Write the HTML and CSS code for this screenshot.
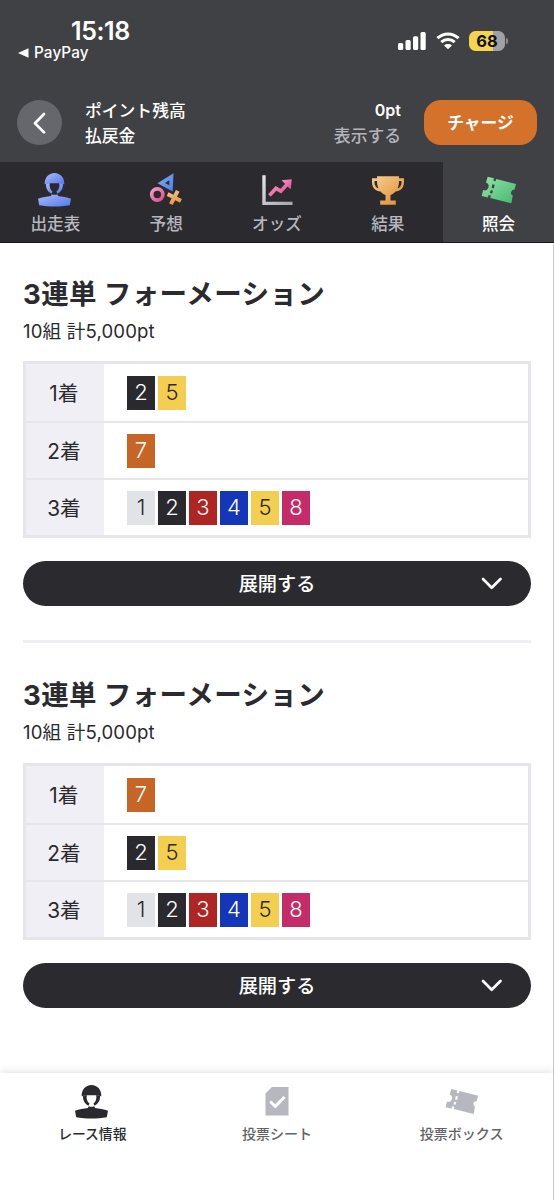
FILE: index.html
```html
<!DOCTYPE html>
<html lang="ja">
<head>
<meta charset="utf-8">
<title>照会</title>
<link rel="stylesheet" href="styles.css">
</head>
<body>
<svg class="defs" width="0" height="0" aria-hidden="true">
  <defs>
    <linearGradient id="blue" x1="0" y1="0" x2="1" y2="1"><stop offset="0" stop-color="#a9bbfa"/><stop offset="1" stop-color="#5478e8"/></linearGradient>
    <linearGradient id="blue2" x1="0" y1="0" x2="1" y2="1"><stop offset="0" stop-color="#86adf2"/><stop offset="1" stop-color="#4a7fe0"/></linearGradient>
    <linearGradient id="pink" x1="0" y1="0" x2="1" y2="1"><stop offset="0" stop-color="#f79bc4"/><stop offset="1" stop-color="#dc4f8f"/></linearGradient>
    <linearGradient id="gold" x1="0" y1="0" x2="1" y2="1"><stop offset="0" stop-color="#f8cf91"/><stop offset="1" stop-color="#dd8b31"/></linearGradient>
    <linearGradient id="green" x1="0" y1="0" x2="1" y2="1"><stop offset="0" stop-color="#93e4a5"/><stop offset="1" stop-color="#43b970"/></linearGradient>
    <linearGradient id="silver" x1="0" y1="0" x2="1" y2="1"><stop offset="0" stop-color="#e4e4e8"/><stop offset="1" stop-color="#a5a5ad"/></linearGradient>
    <symbol id="rider" viewBox="0 0 34 34">
      <path d="M6.700 11.500C6.200 5 10.500 0 16.500 0S26.800 5 26.300 11.500C25 10.600 23.500 10.200 22.200 10.200H10.800C9.500 10.200 8 10.600 6.700 11.500Z"/>
      <path d="M8 10.500 11.700 10C11.300 14 12.200 16.800 14.600 18.700L13.300 20.700C9.800 18.500 7.600 15.500 8 10.500ZM25 10.500 21.300 10C21.700 14 20.800 16.800 18.400 18.700L19.700 20.700C23.200 18.500 25.400 15.500 25 10.500Z"/>
      <path d="M0 25.700C4 24.200 9 23.900 12.900 23L13.700 21.200C15.700 21.900 17.300 21.900 19.300 21.200L20.100 23C24 23.900 29 24.200 33 25.700L31.800 32.200C22 34 11 34 1.200 32.200Z"/>
    </symbol>
    <symbol id="ticket" viewBox="0 0 36 30">
      <path d="M6.700.7 13 2.300 12.400 4.700 14.600 5.300 15.200 2.900 35 8 33.500 13.800A3 3 0 0 0 31.800 19.500L30.300 27.300 9.300 22 9.900 19.600 7.600 19 7 21.400.7 20 2.100 14A3 3 0 0 0 5 6.500ZM11.500 8.200 10.600 11.800 12.800 12.400 13.700 8.800ZM9.700 14.300 8.900 17 11.200 17.500 12 14.800Z" fill-rule="evenodd"/>
    </symbol>
  </defs>
</svg>

<header class="header">
  <div class="status">
    <div class="status-left">
      <div class="clock">15:18</div>
      <div class="back-app"><svg width="11" height="10" viewBox="0 0 11 10"><path d="M0 5 10.500 .3V9.700Z"/></svg><span>PayPay</span></div>
    </div>
    <div class="status-right">
      <svg class="signal" width="28" height="18" viewBox="0 0 28 18"><rect y="11" width="5.200" height="7" rx="1.500"/><rect x="7.500" y="8" width="5.200" height="10" rx="1.500"/><rect x="15" y="4.200" width="5.200" height="13.800" rx="1.500"/><rect x="22.500" width="5.200" height="18" rx="1.500"/></svg>
      <svg class="wifi" width="24" height="18" viewBox="0 0 24 18"><path d="M1.400 6.200C7.500.5 16.500.5 22.600 6.200M5.300 10.200C9.200 6.700 14.800 6.700 18.700 10.200" fill="none" stroke="#fff" stroke-width="3"/><path d="M12 17.300 8 13.400C10.300 11.500 13.700 11.500 16 13.400Z"/></svg>
      <div class="battery">68</div><i class="battery-tip"></i>
    </div>
  </div>
  <div class="account">
    <button class="back" aria-label="戻る"><svg width="14" height="22" viewBox="0 0 14 22"><path d="M11 2 2 11.200 11 20.400"/></svg></button>
    <div class="names"><div>ポイント残高</div><div>払戻金</div></div>
    <div class="values"><div>0pt</div><div class="muted">表示する</div></div>
    <button class="charge">チャージ</button>
  </div>
</header>

<nav class="tabs">
  <a class="tab"><svg width="34" height="34" fill="url(#blue)"><use href="#rider"/></svg><span>出走表</span></a>
  <a class="tab"><svg width="34" height="34" viewBox="0 0 34 34"><path d="M24.500.2 8.500 10.300 23.700 18.500ZM20.300 7.300V12.200L16 10Z" fill="url(#blue2)" fill-rule="evenodd"/><circle cx="8.300" cy="21.500" r="5.600" fill="none" stroke="url(#pink)" stroke-width="3.700"/><g transform="rotate(27 25.300 24.500)" fill="url(#gold)"><path d="M23.300 17h4v5.500h5.500v4h-5.500v5.500h-4v-5.500H17.800v-4h5.500Z"/></g></svg><span>予想</span></a>
  <a class="tab"><svg width="34" height="34" viewBox="0 0 34 34"><path d="M2.300 2.200H5.700V28.700H32.500V32H2.300Z" fill="url(#silver)"/><path d="M9.500 22.500 16 15.300 20.800 18.200 28 10.600" fill="none" stroke="url(#pink)" stroke-width="3.700"/><path d="M21.500 7.300 31.800 6.200 30.700 16.500Z" fill="url(#pink)"/></svg><span>オッズ</span></a>
  <a class="tab"><svg width="34" height="34" viewBox="0 0 34 34"><path d="M6 3.200H28V5.200H33V9C33 15 29 18.500 24.500 18.500 23 20.500 21 21.500 19.500 22V27.500H24.800V31.800H9.200V27.500H14.500V22C13 21.500 11 20.500 9.500 18.500 5 18.500 1 15 1 9V5.200H6ZM6 8H3.500V9.500C3.500 12.500 5 14.800 7.500 15.500 6.500 13.500 6 11 6 8ZM28 8C28 11 27.500 13.500 26.500 15.500 29 14.800 30.500 12.500 30.500 9.500V8Z" fill="url(#gold)" fill-rule="evenodd"/></svg><span>結果</span></a>
  <a class="tab active"><svg width="36" height="34" viewBox="0 -3 36 34" fill="url(#green)"><use href="#ticket" width="36" height="30"/></svg><span>照会</span></a>
</nav>

<main class="content">
  <section class="bet">
    <h2>3連単 フォーメーション</h2>
    <p>10組 計5,000pt</p>
    <div class="grid">
      <div class="row"><div class="place">1着</div><div class="chips"><b class="n2">2</b><b class="n5">5</b></div></div>
      <div class="row"><div class="place">2着</div><div class="chips"><b class="n7">7</b></div></div>
      <div class="row"><div class="place">3着</div><div class="chips"><b class="n1">1</b><b class="n2">2</b><b class="n3">3</b><b class="n4">4</b><b class="n5">5</b><b class="n8">8</b></div></div>
    </div>
    <button class="expand"><span>展開する</span><svg width="22" height="13" viewBox="0 0 22 13"><path d="M2 2 10.700 10.800 19.500 2"/></svg></button>
  </section>
  <section class="bet">
    <h2>3連単 フォーメーション</h2>
    <p>10組 計5,000pt</p>
    <div class="grid">
      <div class="row"><div class="place">1着</div><div class="chips"><b class="n7">7</b></div></div>
      <div class="row"><div class="place">2着</div><div class="chips"><b class="n2">2</b><b class="n5">5</b></div></div>
      <div class="row"><div class="place">3着</div><div class="chips"><b class="n1">1</b><b class="n2">2</b><b class="n3">3</b><b class="n4">4</b><b class="n5">5</b><b class="n8">8</b></div></div>
    </div>
    <button class="expand"><span>展開する</span><svg width="22" height="13" viewBox="0 0 22 13"><path d="M2 2 10.700 10.800 19.500 2"/></svg></button>
  </section>
</main>

<nav class="bottom">
  <a class="item current"><svg width="34" height="34"><use href="#rider"/></svg><span>レース情報</span></a>
  <a class="item"><svg width="34" height="34" viewBox="0 0 34 34"><path d="M12 2H28.500V30.500H5.500V8.500Z"/><path d="M10.200 16.500 15.300 21.300 24.500 12" fill="none" stroke="#fff" stroke-width="3"/></svg><span>投票シート</span></a>
  <a class="item"><svg width="34" height="34" viewBox="0 -3.500 36 36"><use href="#ticket" width="36" height="30"/></svg><span>投票ボックス</span></a>
</nav>
</body>
</html>
```
FILE: styles.css
```css
* { box-sizing: border-box; }

body {
  margin: 0;
  width: 554px;
  height: 1200px;
  display: flex;
  flex-direction: column;
  background: #fff;
  color: #2a2a2f;
  font-family: Inter, "Noto Sans CJK JP", sans-serif;
  overflow: hidden;
}

h2, p { margin: 0; }
button { border: 0; padding: 0; font: inherit; color: #fff; }
svg { display: block; flex: none; }
.defs { position: absolute; }

.header { height: 162px; background: #404145; color: #fff; }
.status { height: 100px; display: flex; justify-content: space-between; }
.status svg { fill: #fff; }
.status-left { padding: 16px 0 0 18px; }
.clock { padding-left: 53px; font-size: 25px; font-weight: 600; line-height: 30px; letter-spacing: -.4px; }
.back-app { display: flex; align-items: center; gap: 5px; font-size: 15.300px; font-weight: 500; line-height: 13px; letter-spacing: .1px; }
.status-right { display: flex; height: 20px; margin: 31px 46px 0 0; align-items: center; }
.wifi { margin: 0 9px 0 10px; }
.battery {
  width: 36px; height: 20px; border-radius: 6.500px;
  background: linear-gradient(90deg, #f6d54e 68%, #a1a1a3 68%);
  color: #111; font-size: 16.500px; font-weight: 700; line-height: 20px; text-align: center;
}
.battery-tip { width: 2px; height: 6px; margin-left: 1px; background: #8e8e91; border-radius: 0 2px 2px 0; }

.account { display: flex; padding: 0 17px; align-items: center; height: 45px; font-size: 16.800px; font-weight: 500; line-height: 25px; }
.back { width: 45px; height: 45px; border-radius: 50%; background: #66676d; display: grid; place-items: center; }
.back svg, .expand svg { fill: none; stroke: #fff; stroke-width: 2.700px; stroke-linecap: round; stroke-linejoin: round; }
.names { margin-left: 23px; padding-top: 2px; }
.values { margin-left: auto; padding-top: 2px; text-align: right; }
.values div:first-child { font-weight: 600; font-size: 16px; line-height: 22px; padding-bottom: 3px; }
.muted { color: #b4b4bb; }
.charge { width: 113px; height: 45px; margin-left: 23px; padding-top: 1px; border-radius: 17px; background: #d4712b; font-weight: 700; }

.tabs { height: 81px; display: grid; grid-template-columns: repeat(5, 1fr); background: #2b2a2f; border-bottom: 1px solid #18181b; margin-bottom: 1px; }
.tab { display: flex; flex-direction: column; align-items: center; padding-top: 11px; color: #b7b7bf; font-size: 16.600px; font-weight: 500; line-height: 34px; }
.tab.active { color: #fff; background: #404145; }

.content { flex: 1; padding: 31px 23px 0; box-shadow: inset -1px 0 #c9c9cb; }
.bet + .bet { margin-top: 34px; padding-top: 33px; border-top: 3px solid #f0eff5; }
.bet h2 { font-size: 27.500px; font-weight: 700; line-height: 38px; white-space: nowrap; letter-spacing: .38px; }
.bet p { font-size: 18.600px; line-height: 28px; margin-top: 4px; letter-spacing: .15px; }
.grid { height: 177px; margin-top: 16px; border: 3px solid #e5e5ea; display: grid; grid-template-rows: repeat(3, 57px); }
.bet + .bet .grid { margin-top: 17px; }
.row { display: flex; background: #fff; }
.row + .row { border-top: 2px solid #e5e5ea; }
.place { width: 78px; padding: 0 2px 2px 0; background: #f0eff5; display: grid; place-items: center; font-size: 20.800px; }
.chips { display: flex; align-items: center; gap: 3px; padding-left: 23px; }
.chips b { width: 28px; height: 34px; line-height: 33px; text-align: center; font-size: 22px; font-weight: 350; color: #fff; }
.chips .n1 { background: #e2e3e7; color: #2a2a2f; }
.chips .n2 { background: #2a2a2e; }
.chips .n3 { background: #ae2524; }
.chips .n4 { background: #1436b9; }
.chips .n5 { background: #f4ce51; color: #2a2a2f; }
.chips .n7 { background: #c66526; }
.chips .n8 { background: #c42b68; }
.expand {
  width: 100%; height: 45px; margin-top: 23px; padding: 0 28px; border-radius: 23px; background: #2b2a2f;
  display: grid; grid-template-columns: 22px 1fr 22px; align-items: center; font-size: 19.200px; font-weight: 500;
}
.expand span { grid-column: 2; padding-bottom: 1px; }

.bottom {
  height: 127px; display: grid; grid-template-columns: repeat(3, 1fr); padding: 12px 0 0;
  background: #fff; box-shadow: inset -1px 0 #c9c9cb, 0 -2px 8px rgba(0, 0, 0, .1);
}
.item { display: flex; flex-direction: column; align-items: center; color: #626267; font-size: 14px; font-weight: 500; line-height: 30px; }
.item svg { fill: #b7b7bf; }
.item.current { color: #2a2a2f; font-size: 13.800px; }
.current svg { fill: #2a2a2e; }
```
